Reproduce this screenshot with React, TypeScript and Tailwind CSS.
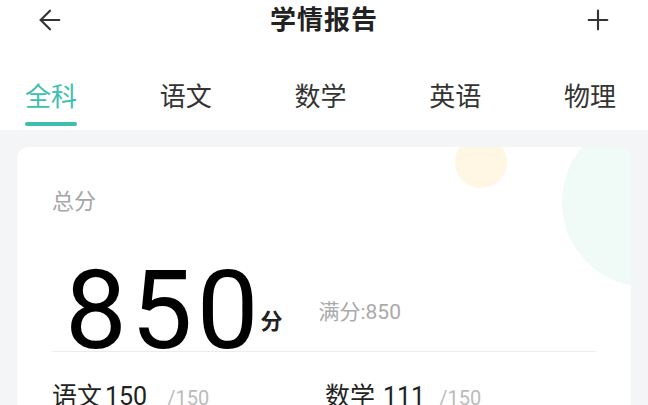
import { ArrowLeft, Plus } from 'lucide-react';

const TABS = ['全科', '语文', '数学', '英语', '物理'];

const FONT = { fontFamily: 'Roboto, "Noto Sans CJK SC", sans-serif' };

export default function App() {
  return (
    <div className="w-[648px] h-[405px] overflow-hidden bg-[#f4f5f7]" style={FONT}>
      {/* Header */}
      <div className="bg-white">
        <div className="h-[40px] flex items-center justify-between px-[34px]">
          <ArrowLeft size={32} strokeWidth={1.6} className="text-[#333]" />
          <h1 className="text-[26px] font-bold text-[#222] tracking-[1px]">学情报告</h1>
          <Plus size={32} strokeWidth={1.6} className="text-[#333]" />
        </div>
        {/* Tabs */}
        <div className="h-[90px] flex justify-between pl-[25px] pr-[32px] pt-[37px]">
          {TABS.map((t, i) => (
            <div key={t} className="flex flex-col items-center">
              <span
                className={
                  'text-[26px] leading-[40px] ' + (i === 0 ? 'text-[#3dbfae]' : 'text-[#333]')
                }
              >
                {t}
              </span>
              {i === 0 && <div className="mt-[5px] w-[52px] h-[4px] rounded-full bg-[#3dbfae]" />}
            </div>
          ))}
        </div>
      </div>

      {/* Card */}
      <div className="px-[17px] pt-[17px]">
        <div className="relative overflow-hidden rounded-[12px] bg-white h-[300px] px-[35px] pt-[40px]">
          <div className="absolute left-[438px] top-[-11px] w-[52px] h-[52px] rounded-full bg-[#fff6e3]" />
          <div className="absolute left-[545px] top-[-30px] w-[170px] h-[170px] rounded-full bg-[#f0faf7]" />

          <div className="relative text-[22px] text-[#a6a6a6] leading-[30px]">总分</div>

          <div className="relative mt-[55px] flex items-end border-b border-[#ececec] h-[80px]">
            <span className="text-[110px] leading-[80px] text-black ml-[13px] tracking-[4px]">850</span>
            <span className="text-[22px] leading-[30px] font-bold text-[#222] ml-[-2px] mb-[14px]">分</span>
            <span className="text-[21px] leading-[30px] text-[#aaa] ml-[36px] mb-[24px]">满分:850</span>
          </div>

          <div className="relative mt-[26px] flex">
            <div className="w-[273px] flex items-baseline">
              <span className="text-[25px] text-[#222]">语文</span>
              <span className="text-[25px] text-[#222] ml-[3px]">150</span>
              <span className="text-[20px] text-[#bbb] ml-[20px]">/150</span>
            </div>
            <div className="flex items-baseline">
              <span className="text-[25px] text-[#222]">数学</span>
              <span className="text-[25px] text-[#222] ml-[8px]">111</span>
              <span className="text-[20px] text-[#bbb] ml-[14px]">/150</span>
            </div>
          </div>
        </div>
      </div>
    </div>
  );
}
